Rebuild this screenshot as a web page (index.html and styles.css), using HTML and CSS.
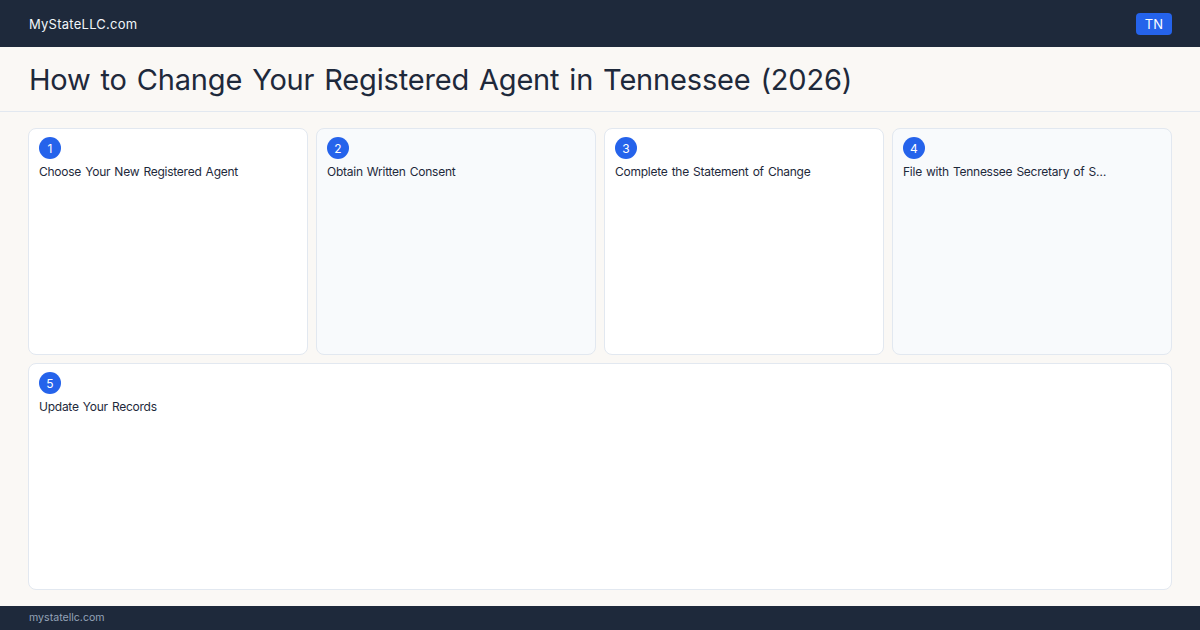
FILE: index.html
```html
<!DOCTYPE html>
<html lang="en">
<head>
  <meta charset="UTF-8">
  <title>How to Change Your Registered Agent in Tennessee (2026)</title>
  <link rel="stylesheet" href="styles.css">
</head>
<body>
  <header class="topbar">
    <span class="brand">MyStateLLC.com</span>
    <span class="state-tag">TN</span>
  </header>

  <section class="page-title">
    <h1>How to Change Your Registered Agent in Tennessee (2026)</h1>
  </section>

  <main class="steps">
    <div class="step">
      <span class="step-num">1</span>
      <p class="step-label">Choose Your New Registered Agent</p>
    </div>
    <div class="step alt">
      <span class="step-num">2</span>
      <p class="step-label">Obtain Written Consent</p>
    </div>
    <div class="step">
      <span class="step-num">3</span>
      <p class="step-label">Complete the Statement of Change</p>
    </div>
    <div class="step alt">
      <span class="step-num">4</span>
      <p class="step-label">File with Tennessee Secretary of S…</p>
    </div>
    <div class="step wide">
      <span class="step-num">5</span>
      <p class="step-label">Update Your Records</p>
    </div>
  </main>

  <footer class="footer">mystatellc.com</footer>
</body>
</html>
```

FILE: styles.css
```css
* {
  box-sizing: border-box;
}

html, body {
  margin: 0;
  height: 100%;
}

body {
  font-family: Inter, "Liberation Sans", Arial, sans-serif;
  background-color: #faf8f5;
  color: #1e293b;
  display: flex;
  flex-direction: column;
  overflow: hidden;
}

.topbar {
  height: 47px;
  flex-shrink: 0;
  background-color: #1e293b;
  display: flex;
  align-items: center;
  justify-content: space-between;
  padding: 0 28px 0 29px;
}

.brand {
  color: #f1f5f9;
  font-size: 13px;
  letter-spacing: 0.25px;
}

.state-tag {
  background-color: #2563eb;
  color: #fff;
  font-size: 13px;
  line-height: 22px;
  padding: 0 9px;
  border-radius: 4px;
}

.page-title {
  height: 65px;
  flex-shrink: 0;
  border-bottom: 1px solid #e2e8f0;
  display: flex;
  align-items: center;
  padding: 0 29px;
}

.page-title h1 {
  margin: 0;
  font-size: 29px;
  font-weight: 400;
  color: #1e293b;
  letter-spacing: -0.18px;
  word-spacing: 2px;
}

/* step cards: four across, the last one spans the full row */
.steps {
  flex: 1;
  display: grid;
  grid-template-columns: repeat(4, 1fr);
  grid-template-rows: 1fr 1fr;
  gap: 8px;
  padding: 16px 28px;
}

.step {
  background-color: #fff;
  border: 1px solid #e2e8f0;
  border-radius: 8px;
  padding: 8px 10px;
  min-width: 0;
}

.step.alt {
  background-color: #f8fafc;
}

.step.wide {
  grid-column: 1 / -1;
}

.step-num {
  display: flex;
  align-items: center;
  justify-content: center;
  width: 22px;
  height: 22px;
  border-radius: 50%;
  background-color: #2563eb;
  color: #fff;
  font-size: 12px;
}

.step-label {
  margin: 5px 0 0;
  font-size: 12px;
  line-height: 16px;
  color: #1e293b;
  letter-spacing: -0.25px;
  word-spacing: 1px;
  white-space: nowrap;
  overflow: hidden;
  text-overflow: ellipsis;
}

.footer {
  height: 24px;
  flex-shrink: 0;
  background-color: #1e293b;
  color: #94a3b8;
  font-size: 10.6px;
  line-height: 24px;
  padding: 0 29px;
}
```
